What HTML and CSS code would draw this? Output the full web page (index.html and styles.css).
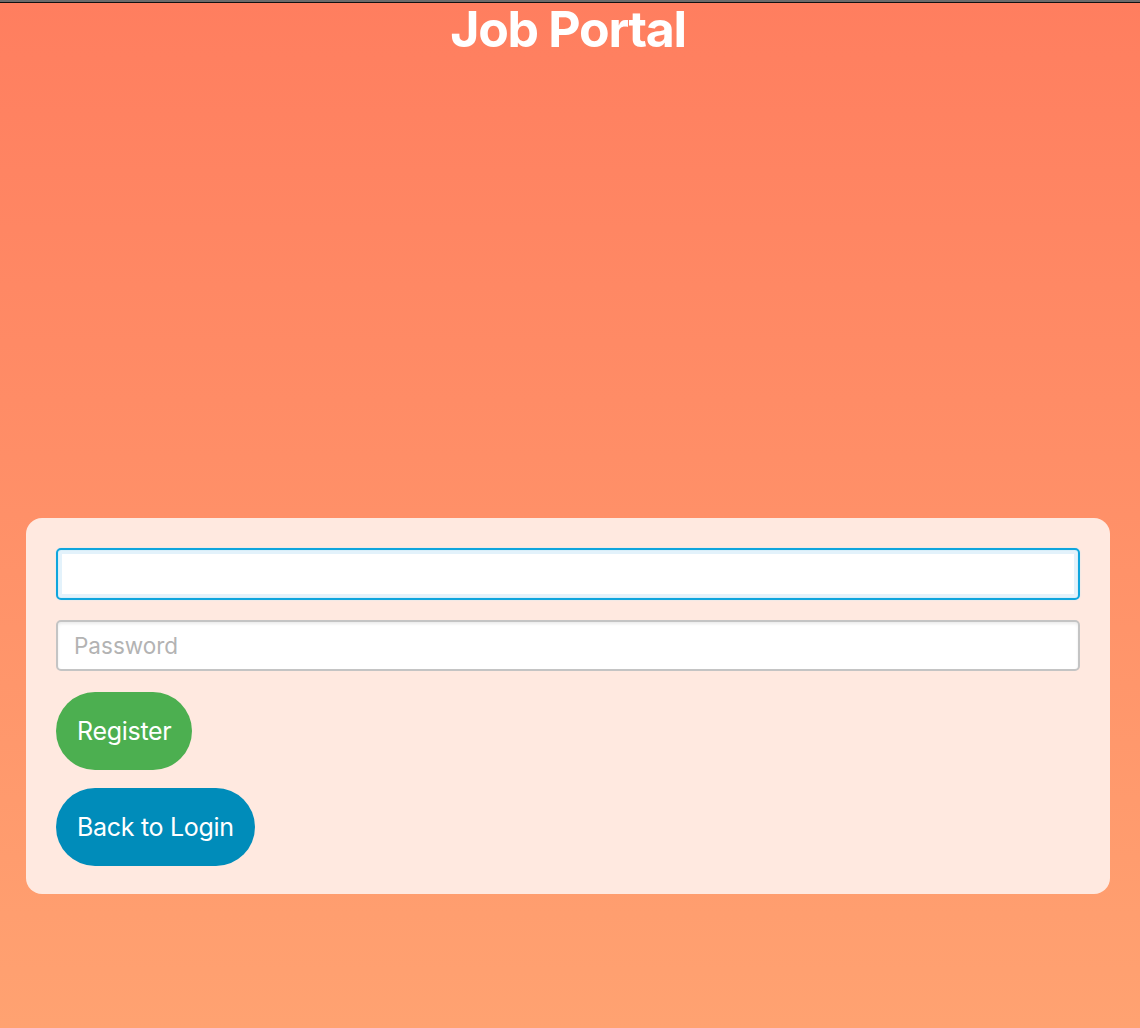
FILE: index.html
```html
<!DOCTYPE html>
<html lang="en">
<head>
<meta charset="utf-8">
<title>Job Portal</title>
<link rel="stylesheet" href="styles.css">
</head>
<body>
<div class="topline"></div>
<h1 class="title">Job Portal</h1>
<main class="page">
  <form class="card">
    <input class="field field-focus" type="text" aria-label="Username">
    <input class="field" type="password" placeholder="Password">
    <div class="actions">
      <button type="button" class="btn btn-green">Register</button>
      <button type="button" class="btn btn-blue">Back to Login</button>
    </div>
  </form>
</main>
</body>
</html>
```
FILE: styles.css
```css
html, body {
  margin: 0;
  padding: 0;
}
body {
  min-height: 1028px;
  background: linear-gradient(180deg, #ff7e5f 0px, #ffa271 1028px);
  font-family: Inter, "Noto Sans", sans-serif;
  display: flex;
  flex-direction: column;
}
.topline {
  height: 2px;
  background: #6b6b6b;
  border-bottom: 1px solid #111;
}
.title {
  margin: 0;
  padding-right: 4px;
  text-align: center;
  color: #fff;
  font-size: 50px;
  font-weight: 700;
  letter-spacing: -1.3px;
  line-height: 52px;
}
.page {
  padding: 463px 30px 0 26px;
}
.card {
  background: #ffe9e0;
  border-radius: 16px;
  padding: 30px 30px 28px 30px;
  display: flex;
  flex-direction: column;
  gap: 20px;
}
.field {
  box-sizing: border-box;
  height: 51px;
  width: 100%;
  margin: 0;
  border: 2px solid #c4c4c4;
  border-radius: 5px;
  background: #fff;
  box-shadow: inset 0 2px 3px rgba(0,0,0,0.08);
  padding: 0 16px;
  font-family: Inter, sans-serif;
  font-size: 22.5px;
  color: #333;
  outline: none;
}
.field::placeholder {
  color: #b3b3b3;
}
.field-focus {
  height: 52px;
  border: 2px solid #0ea5dd;
  box-shadow: 0 0 0 1px #d8eef9 inset, inset 0 0 0 4px #e3f2fb, 0 0 2px #cfe6f3;
}
.actions {
  margin-top: 1px;
  display: flex;
  flex-direction: column;
  align-items: flex-start;
  gap: 18px;
}
.btn {
  border: none;
  border-radius: 40px;
  color: #fff;
  font-family: Inter, sans-serif;
  font-size: 25px;
  font-weight: 400;
  letter-spacing: -0.3px;
  height: 78px;
  padding: 0 21px;
  cursor: pointer;
}
.btn-green {
  background: #4caf50;
}
.btn-blue {
  background: #008cba;
}
```
